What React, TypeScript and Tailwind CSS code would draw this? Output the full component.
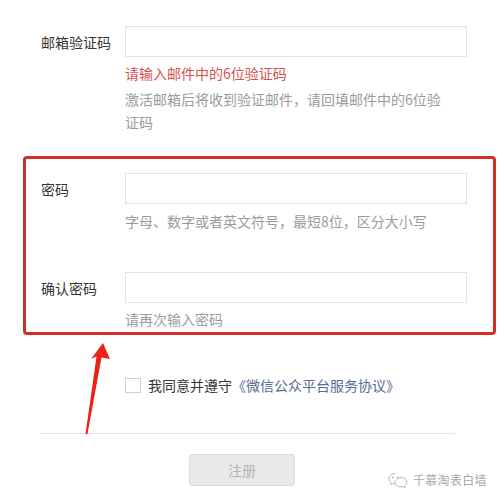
import React from "react";

const font = { fontFamily: '"Noto Sans CJK SC", "Noto Sans", sans-serif' };

const FieldRow: React.FC<{ label: string }> = ({ label }) => (
  <div className="flex items-center">
    <div className="w-[84px] text-[14px] text-[#353535] leading-[20px]">{label}</div>
    <div className="w-[342px] h-[31px] border border-[#e2e2e2] bg-white" />
  </div>
);

export default function App() {
  return (
    <div className="relative w-[500px] h-[501px] bg-white overflow-hidden" style={font}>
      <div className="pt-[26px]">
        {/* 邮箱验证码 */}
        <div className="pl-[41px]">
          <FieldRow label="邮箱验证码" />
          <div className="pl-[84px]">
            <p className="mt-[5px] text-[14px] leading-[22px] text-[#d4514e]">请输入邮件中的6位验证码</p>
            <p className="mt-[4px] text-[14px] leading-[23px] text-[#9b9b9b]">
              激活邮箱后将收到验证邮件，请回填邮件中的6位验
              <br />
              证码
            </p>
          </div>
        </div>

        {/* highlighted password block */}
        <div className="mt-[22px] ml-[23px] w-[473px] border-[3px] border-[#cf2e29] rounded-[4px] pl-[15px] pt-[14px] pb-[2px]">
          <FieldRow label="密码" />
          <p className="mt-[6px] pl-[84px] text-[14px] leading-[22px] text-[#9b9b9b]">
            字母、数字或者英文符号，最短8位，区分大小写
          </p>
          <div className="mt-[40px]">
            <FieldRow label="确认密码" />
          </div>
          <p className="mt-[5px] pl-[84px] text-[14px] leading-[22px] text-[#9b9b9b]">请再次输入密码</p>
        </div>

        {/* agreement */}
        <div className="mt-[40px] pl-[125px] flex items-center">
          <div className="w-[16px] h-[15px] border border-[#cfcfcf] bg-white" />
          <span className="ml-[7px] text-[14px] leading-[20px] text-[#353535]">
            我同意并遵守<span className="text-[#576b95]">《微信公众平台服务协议》</span>
          </span>
        </div>

        <div className="mt-[38px] ml-[40px] w-[415px] h-px bg-[#e6e6e6]" />

        <button className="mt-[20px] ml-[189px] w-[106px] h-[32px] rounded-[3px] border border-[#dcdcdc] bg-[#e9e9e9] text-[14px] text-[#b4b4b4]">
          注册
        </button>
      </div>

      {/* red arrow annotation */}
      <svg className="absolute left-0 top-0 pointer-events-none" width="500" height="501">
        <polygon
          points="103,343 91,359 96.5,356.5 85.5,434 87.5,434 101.5,357.5 110,359"
          fill="#e8231c"
        />
      </svg>

      {/* watermark */}
      <div className="absolute left-[387px] top-[471px] flex items-center text-[#a8a8a8]">
        <svg width="22" height="18" viewBox="0 0 22 18" fill="none" stroke="#b5b5b5" strokeWidth="1">
          <path d="M8.5 2.5c-3.6 0-6.5 2.3-6.5 5.2 0 1.6.9 3 2.3 4l-.6 1.9 2.2-1.1c.8.2 1.7.4 2.6.4" />
          <path d="M14 6.5c-3.3 0-6 2.1-6 4.7s2.7 4.7 6 4.7c.8 0 1.5-.1 2.2-.3l1.9 1-.5-1.6c1.5-.9 2.4-2.3 2.4-3.8 0-2.6-2.7-4.7-6-4.7z" />
          <circle cx="6" cy="6.5" r=".6" fill="#b5b5b5" />
          <circle cx="11" cy="6.5" r=".6" fill="#b5b5b5" />
        </svg>
        <span className="ml-[4px] text-[12px] leading-[18px] tracking-[0.3px]">千慕淘表白墙</span>
      </div>
    </div>
  );
}
